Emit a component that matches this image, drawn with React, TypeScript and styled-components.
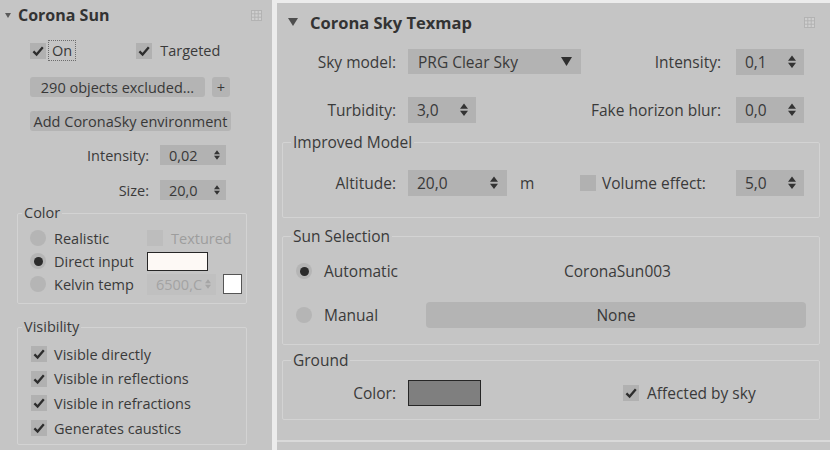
import React, { FC, ReactNode } from "react";
import styled, { createGlobalStyle } from "styled-components";

const GlobalStyle = createGlobalStyle`
  html, body {
    margin: 0;
    padding: 0;
    background: #ececec;
  }
  body {
    font-family: "Open Sans", "Liberation Sans", sans-serif;
    color: #3a3a3a;
  }
  * {
    box-sizing: border-box;
  }
`;

const Page = styled.div`
  display: flex;
  gap: 5px;
  width: 830px;
  height: 450px;
  overflow: hidden;
  background: #ececec;
`;

const LeftPanel = styled.div`
  width: 272px;
  flex: none;
  display: flex;
  flex-direction: column;
  background: #c5c5c5;
  font-size: 14.5px;
`;

const RightPanel = styled.div`
  flex: 1;
  margin-top: 3px;
  display: flex;
  flex-direction: column;
  background: #c5c5c5;
  font-size: 15.5px;
`;

const RightBody = styled.div`
  height: 439px;
  display: flex;
  flex-direction: column;
  border-bottom: 2px solid #d9d9d9;
`;

interface TitleBarProps {
  $h: number;
  $pl: number;
  $pr: number;
}

const TitleBar = styled.div<TitleBarProps>`
  display: flex;
  align-items: center;
  height: ${(p) => p.$h}px;
  padding: 0 ${(p) => p.$pr}px 0 ${(p) => p.$pl}px;
  flex: none;
`;

const Title = styled.span<{ $size: number; $ml: number }>`
  margin-left: ${(p) => p.$ml}px;
  font-size: ${(p) => p.$size}px;
  font-weight: 700;
  color: #333;
`;

const Grip = styled.span`
  margin-left: auto;
  display: flex;
`;

const Row = styled.div<{ $h: number; $mt?: number; $pl?: number; $pr?: number; $end?: boolean }>`
  display: flex;
  align-items: center;
  flex: none;
  height: ${(p) => p.$h}px;
  margin-top: ${(p) => p.$mt ?? 0}px;
  padding-left: ${(p) => p.$pl ?? 0}px;
  padding-right: ${(p) => p.$pr ?? 0}px;
  justify-content: ${(p) => (p.$end ? "flex-end" : "flex-start")};
  white-space: nowrap;
`;

const FieldLabel = styled.span<{ $w?: number; $mr: number }>`
  ${(p) => (p.$w ? `width: ${p.$w}px; flex: none;` : "")}
  text-align: right;
  margin-right: ${(p) => p.$mr}px;
`;

const Text = styled.span<{ $ml?: number; $muted?: boolean }>`
  margin-left: ${(p) => p.$ml ?? 0}px;
  color: ${(p) => (p.$muted ? "#9d9d9d" : "inherit")};
`;

const FocusText = styled.span`
  margin-left: 3px;
  padding: 0 3px;
  line-height: 19px;
  outline: 1px dotted #6d6d6d;
`;

const Cell = styled.div<{ $w: number }>`
  width: ${(p) => p.$w}px;
  flex: none;
  display: flex;
  align-items: center;
`;

const Spacer = styled.div<{ $w: number }>`
  width: ${(p) => p.$w}px;
  flex: none;
`;

const PushRight = styled.div<{ $w?: number }>`
  margin-left: auto;
  display: flex;
  align-items: center;
  ${(p) => (p.$w ? `width: ${p.$w}px;` : "")}
`;

const Button = styled.div<{ $w: number; $h: number; $r?: number; $ml?: number }>`
  width: ${(p) => p.$w}px;
  height: ${(p) => p.$h}px;
  margin-left: ${(p) => p.$ml ?? 0}px;
  flex: none;
  display: flex;
  align-items: center;
  justify-content: center;
  background: #b4b4b4;
  border-radius: ${(p) => p.$r ?? 3}px;
  color: #383838;
`;

const SpinBox = styled.div<{ $w: number; $h: number; $disabled?: boolean; $pad: number }>`
  width: ${(p) => p.$w}px;
  height: ${(p) => p.$h}px;
  flex: none;
  display: flex;
  align-items: center;
  justify-content: space-between;
  padding: 0 ${(p) => p.$pad}px 0 9px;
  background: ${(p) => (p.$disabled ? "#c0c0c0" : "#b2b2b2")};
  color: ${(p) => (p.$disabled ? "#a3a3a3" : "#393939")};
  overflow: hidden;
`;

const Dropdown = styled.div`
  width: 173px;
  height: 25px;
  flex: none;
  display: flex;
  align-items: center;
  justify-content: space-between;
  padding: 0 9px 0 10px;
  background: #b3b3b3;
`;

const BoxBase = styled.span<{ $disabled?: boolean }>`
  width: 16px;
  height: 16px;
  flex: none;
  display: inline-flex;
  align-items: center;
  justify-content: center;
  background: ${(p) => (p.$disabled ? "#bdbdbd" : "#b1b1b1")};
`;

const RadioDot = styled.span<{ $on?: boolean }>`
  width: 16px;
  height: 16px;
  flex: none;
  border-radius: 50%;
  background: #b5b5b5;
  display: flex;
  align-items: center;
  justify-content: center;
  &::after {
    content: "";
    display: ${(p) => (p.$on ? "block" : "none")};
    width: 9px;
    height: 9px;
    border-radius: 50%;
    background: #2c2c2c;
  }
`;

const Swatch = styled.div<{ $w: number; $h: number; $fill: string }>`
  width: ${(p) => p.$w}px;
  height: ${(p) => p.$h}px;
  flex: none;
  background: ${(p) => p.$fill};
  border: 1.5px solid #262626;
`;

const SmallSwatch = styled.div`
  width: 19px;
  height: 20px;
  margin-left: 7px;
  flex: none;
  background: #fff;
  border: 1px solid #555;
`;

const Group = styled.fieldset<{ $m: string; $pad: string }>`
  margin: ${(p) => p.$m};
  padding: ${(p) => p.$pad};
  border: 1px solid #d3d3d3;
  border-radius: 2px;
  min-width: 0;
  display: flex;
  flex-direction: column;
  flex: none;
`;

// legend sits at the padding edge, so the offset is relative to the group padding
const GroupTitle = styled.legend<{ $ml: number }>`
  margin-left: ${(p) => p.$ml}px;
  padding: 0 2px;
  line-height: 16px;
  color: #3a3a3a;
`;

const Caret: FC<{ w: number; h: number; color: string }> = ({ w, h, color }) => (
  <svg width={w} height={h} viewBox="0 0 10 8">
    <path d="M0 0 H10 L5 8 Z" fill={color} />
  </svg>
);

const GripIcon = () => (
  <svg width="11" height="11" viewBox="0 0 11 11">
    <rect x="0.5" y="0.5" width="10" height="10" fill="#cfcfcf" stroke="#b3b3b3" />
    <path d="M3.8 0.5 V10.5 M7.2 0.5 V10.5 M0.5 3.8 H10.5 M0.5 7.2 H10.5" stroke="#b3b3b3" />
  </svg>
);

const SpinArrows: FC<{ w: number; color?: string }> = ({ w, color = "#333" }) => (
  <svg width={w} height={w * 1.7} viewBox="0 0 8 13.6">
    <path d="M0 5.8 L4 0.5 L8 5.8 Z M0 7.8 L8 7.8 L4 13.1 Z" fill={color} />
  </svg>
);

const Check: FC<{ checked?: boolean; disabled?: boolean }> = ({ checked, disabled }) => (
  <BoxBase $disabled={disabled}>
    {checked && (
      <svg width="12" height="12" viewBox="0 0 12 12">
        <path d="M1.4 6.4 L4.6 9.6 L10.8 2.2" fill="none" stroke="#2d2d2d" strokeWidth="2.3" />
      </svg>
    )}
  </BoxBase>
);

interface SpinnerProps {
  value: string;
  w: number;
  h: number;
  arrow: number;
  pad: number;
  disabled?: boolean;
}

const Spinner: FC<SpinnerProps> = ({ value, w, h, arrow, pad, disabled }) => (
  <SpinBox $w={w} $h={h} $pad={pad} $disabled={disabled}>
    <span>{value}</span>
    <SpinArrows w={arrow} color={disabled ? "#a5a5a5" : "#333"} />
  </SpinBox>
);

const RadioItem: FC<{ on?: boolean; gap: number; children: ReactNode }> = ({ on, gap, children }) => (
  <>
    <RadioDot $on={on} />
    <Text $ml={gap}>{children}</Text>
  </>
);

const visibility = ["Visible directly", "Visible in reflections", "Visible in refractions", "Generates caustics"];

const CoronaSun = () => (
  <LeftPanel>
    <TitleBar $h={30} $pl={5} $pr={10}>
      <Caret w={6} h={5} color="#5a5a5a" />
      <Title $size={16} $ml={7}>
        Corona Sun
      </Title>
      <Grip>
        <GripIcon />
      </Grip>
    </TitleBar>

    <Row $h={21} $mt={10} $pl={30}>
      <Check checked />
      <FocusText>On</FocusText>
      <Spacer $w={61} />
      <Check checked />
      <Text $ml={8}>Targeted</Text>
    </Row>

    <Row $h={20} $mt={16} $pl={30}>
      <Button $w={175} $h={20}>290 objects excluded...</Button>
      <Button $w={18} $h={20} $ml={7}>
        +
      </Button>
    </Row>

    <Row $h={20} $mt={14} $pl={30}>
      <Button $w={201} $h={20}>Add CoronaSky environment</Button>
    </Row>

    <Row $h={20} $mt={14} $pr={46} $end>
      <FieldLabel $mr={11}>Intensity:</FieldLabel>
      <Spinner value="0,02" w={66} h={20} arrow={6} pad={6} />
    </Row>

    <Row $h={20} $mt={15} $pr={46} $end>
      <FieldLabel $mr={11}>Size:</FieldLabel>
      <Spinner value="20,0" w={66} h={20} arrow={6} pad={6} />
    </Row>

    <Group $m="5px 25px 0 17px" $pad="6px 0 8px 12px">
      <GroupTitle $ml={-8}>Color</GroupTitle>
      <Row $h={22}>
        <Cell $w={117}>
          <RadioItem gap={8}>Realistic</RadioItem>
        </Cell>
        <Check disabled />
        <Text $ml={8} $muted>
          Textured
        </Text>
      </Row>
      <Row $h={22} $mt={1}>
        <Cell $w={117}>
          <RadioItem on gap={8}>
            Direct input
          </RadioItem>
        </Cell>
        <Swatch $w={61} $h={19} $fill="#fdf9f5" />
      </Row>
      <Row $h={22} $mt={1}>
        <Cell $w={117}>
          <RadioItem gap={8}>Kelvin temp</RadioItem>
        </Cell>
        <Spinner value="6500,C" w={69} h={21} arrow={6} pad={5} disabled />
        <SmallSwatch />
      </Row>
    </Group>

    <Group $m="15px 25px 0 17px" $pad="7px 0 4px 13px">
      <GroupTitle $ml={-9}>Visibility</GroupTitle>
      {visibility.map((label, i) => (
        <Row key={label} $h={24} $mt={i ? 0.7 : 0}>
          <Check checked />
          <Text $ml={7}>{label}</Text>
        </Row>
      ))}
    </Group>
  </LeftPanel>
);

const CoronaSkyTexmap = () => (
  <RightPanel>
    <RightBody>
      <TitleBar $h={38} $pl={11} $pr={15}>
        <Caret w={10} h={8} color="#4e4e4e" />
        <Title $size={16.5} $ml={12}>
          Corona Sky Texmap
        </Title>
        <Grip>
          <GripIcon />
        </Grip>
      </TitleBar>

      <Row $h={27} $mt={7} $pr={26}>
        <FieldLabel $w={119} $mr={12}>
          Sky model:
        </FieldLabel>
        <Dropdown>
          <span>PRG Clear Sky</span>
          <Caret w={11} h={9} color="#2f2f2f" />
        </Dropdown>
        <PushRight>
          <FieldLabel $mr={15}>Intensity:</FieldLabel>
          <Spinner value="0,1" w={68} h={26} arrow={8} pad={8} />
        </PushRight>
      </Row>

      <Row $h={26} $mt={22} $pr={26}>
        <FieldLabel $w={119} $mr={12}>
          Turbidity:
        </FieldLabel>
        <Spinner value="3,0" w={68} h={26} arrow={8} pad={8} />
        <PushRight>
          <FieldLabel $mr={15}>Fake horizon blur:</FieldLabel>
          <Spinner value="0,0" w={68} h={26} arrow={8} pad={8} />
        </PushRight>
      </Row>

      <Group $m="11px 10px 0 5px" $pad="20px 15px 21px 0">
        <GroupTitle $ml={8}>Improved Model</GroupTitle>
        <Row $h={26}>
          <FieldLabel $w={113} $mr={12}>
            Altitude:
          </FieldLabel>
          <Spinner value="20,0" w={99} h={26} arrow={8} pad={9} />
          <Text $ml={13}>m</Text>
          <PushRight $w={224}>
            <Check />
            <Text $ml={6}>Volume effect:</Text>
            <PushRight>
              <Spinner value="5,0" w={68} h={26} arrow={8} pad={8} />
            </PushRight>
          </PushRight>
        </Row>
      </Group>

      <Group $m="10px 10px 0 5px" $pad="14px 0 16px 13px">
        <GroupTitle $ml={-5}>Sun Selection</GroupTitle>
        <Row $h={26}>
          <Cell $w={268}>
            <RadioItem on gap={12}>
              Automatic
            </RadioItem>
          </Cell>
          <Text>CoronaSun003</Text>
        </Row>
        <Row $h={26} $mt={18}>
          <Cell $w={130}>
            <RadioItem gap={12}>Manual</RadioItem>
          </Cell>
          <Button $w={380} $h={26} $r={4}>
            None
          </Button>
        </Row>
      </Group>

      <Group $m="7px 10px 0 5px" $pad="12px 0 13px 0">
        <GroupTitle $ml={8}>Ground</GroupTitle>
        <Row $h={26}>
          <FieldLabel $w={113} $mr={12}>
            Color:
          </FieldLabel>
          <Swatch $w={73} $h={26} $fill="#7f7f7f" />
          <Spacer $w={142} />
          <Check checked />
          <Text $ml={8}>Affected by sky</Text>
        </Row>
      </Group>
    </RightBody>
  </RightPanel>
);

const App = () => (
  <>
    <GlobalStyle />
    <Page>
      <CoronaSun />
      <CoronaSkyTexmap />
    </Page>
  </>
);

export default App;
